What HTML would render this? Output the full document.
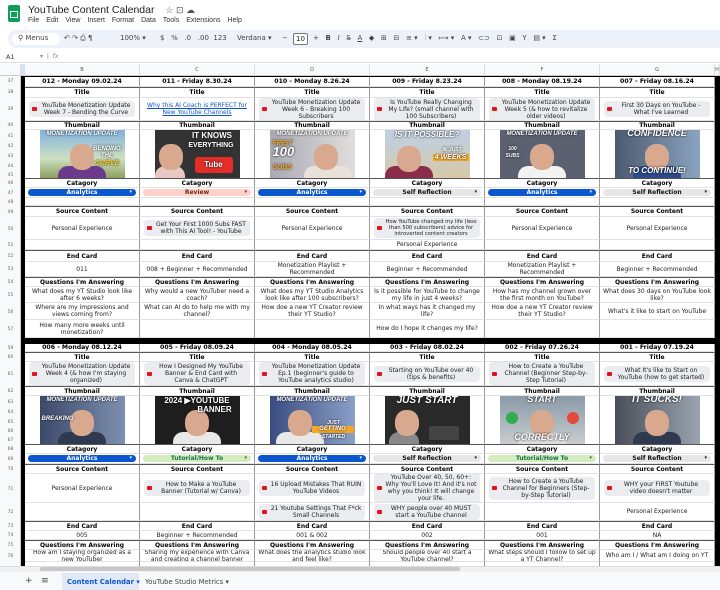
<!DOCTYPE html>
<html><head><meta charset="utf-8">
<style>
*{box-sizing:border-box;margin:0;padding:0}
body{width:720px;height:590px;overflow:hidden;background:#fff;font-family:"DejaVu Sans","Liberation Sans",sans-serif;position:relative;color:#1f1f1f}
.abs{position:absolute}
.menu span{margin-right:7px}
.tb{position:absolute;top:30px;left:8px;width:712px;height:18px;background:#edf2fa;border-radius:9px 0 0 9px}
.tb span{position:absolute;top:4px;font-size:7px;color:#444}
.colh{position:absolute;top:64px;height:12px;background:#f8f9fa;border-bottom:1px solid #ccc;border-right:1px solid #ddd;font-size:5px;color:#555;text-align:center;line-height:12px}
.rn{position:absolute;left:0;width:21px;font-size:4.5px;color:#666;text-align:center}
.blk{position:absolute;left:25px;width:690px;display:grid;grid-template-columns:repeat(6,115px);overflow:hidden;background:#fff}
.c{border-right:1px solid #9a9a9a;border-bottom:1px solid #e2e2e2;display:flex;align-items:center;justify-content:center;text-align:center;font-size:6px;line-height:7px;overflow:hidden;color:#222;padding:0 2px;flex-direction:column}
.s{border-top:1px solid #555}
.h{font-weight:bold;color:#000}
.hd{font-weight:bold;color:#000;font-size:6.2px}
.ch{background:#eaecef;border-radius:4px;padding:1px 3px;display:flex;align-items:center;gap:3px;max-width:106px;text-align:center}
.yt{width:5px;height:4px;background:#e5121a;border-radius:1px;flex:none}
.dd{width:108px;height:7px;border-radius:4px;font-weight:bold;font-size:6px;line-height:7px;position:relative}
.dd:after{content:"▾";position:absolute;right:4px;top:0;font-size:5px}
.an{background:#0b57d0;color:#fff}
.rv{background:#ffcfc9;color:#6b2b12}
.sr{background:#e6e6e6;color:#111}
.tu{background:#d4edbc;color:#11734b}
.th{width:85px;height:48px;position:relative;overflow:hidden;font-weight:bold;font-style:italic;color:#fff;font-family:"Liberation Sans",sans-serif;text-shadow:0 0 2px #000}
.th b{position:absolute;left:0;right:0;text-align:center}
.face{position:absolute;left:30px;top:14px;width:24px;height:26px;border-radius:45%;background:#d9a98f}
.body{position:absolute;left:18px;top:36px;width:48px;height:14px;border-radius:10px 10px 0 0}
.lk{color:#1155cc;text-decoration:underline}
.sm{font-size:5.2px;line-height:6px}
</style></head><body>

<!-- top chrome -->
<div class="abs" style="left:8px;top:5px;width:12px;height:17px;background:#0f9d58;border-radius:2px"></div>
<div class="abs" style="left:10px;top:11px;width:8px;height:7px;border:1px solid #fff"></div>
<div class="abs" style="left:28px;top:4px;font-size:10.5px;font-family:'Liberation Sans',sans-serif;color:#1f1f1f">YouTube Content Calendar <span style="font-size:9px;color:#555;margin-left:8px">☆ ⊡ ☁</span></div>
<div class="abs menu" style="left:28px;top:17px;font-size:7px;font-family:'Liberation Sans',sans-serif;color:#333"><span>File</span><span>Edit</span><span>View</span><span>Insert</span><span>Format</span><span>Data</span><span>Tools</span><span>Extensions</span><span>Help</span></div>
<div class="tb">
<div class="abs" style="left:4px;top:3px;width:48px;height:12px;background:#fff;border-radius:6px"></div>
<span style="left:10px">⚲ Menus</span>
<span style="left:56px">↶ ↷ ⎙ ¶</span>
<span style="left:112px">100% ▾</span>
<span style="left:152px">$ &nbsp; % &nbsp; .0 &nbsp; .00 &nbsp;123</span>
<span style="left:229px">Verdana ▾</span>
<span style="left:274px">−</span>
<div class="abs" style="left:285px;top:3px;width:15px;height:12px;border:1px solid #777;border-radius:2px;background:#fff;font-size:7px;text-align:center;line-height:10px">10</div>
<span style="left:305px">+ &nbsp; <b>B</b> &nbsp; <i>I</i> &nbsp; S̶ &nbsp; <u>A</u> &nbsp; ◆ &nbsp; ⊞ &nbsp; ⊟ &nbsp; ≡ ▾ &nbsp; ⫶ ▾ &nbsp; ⟼ ▾ &nbsp; A ▾ &nbsp; ⊂⊃ &nbsp; ⊡ &nbsp; ▣ &nbsp; Y &nbsp; ▤ ▾ &nbsp; Σ</span>
</div>
<div class="abs" style="left:6px;top:53px;font-size:6.5px;color:#333">A1</div>
<div class="abs" style="left:40px;top:53px;font-size:6px;color:#888">▾ &nbsp;| &nbsp;<i>fx</i></div>
<div class="abs" style="left:0;top:62px;width:720px;height:1px;background:#ddd"></div>

<!-- column headers -->
<div class="colh" style="left:0;width:21px"></div>
<div class="colh" style="left:21px;width:4px;background:#d3e3fd"></div>
<div class="colh" style="left:25px;width:115px">B</div>
<div class="colh" style="left:140px;width:115px">C</div>
<div class="colh" style="left:255px;width:115px">D</div>
<div class="colh" style="left:370px;width:115px">E</div>
<div class="colh" style="left:485px;width:115px">F</div>
<div class="colh" style="left:600px;width:115px">G</div>
<div class="colh" style="left:715px;width:5px">H</div>

<!-- row numbers -->
<div class="abs" style="left:0;top:76px;width:21px;height:492px;background:#f8f9fa;border-right:1px solid #ccc"></div>
<div class="rn" style="top:79px">37</div><div class="rn" style="top:90px">38</div><div class="rn" style="top:107px">39</div><div class="rn" style="top:123px">40</div><div class="rn" style="top:134px">41</div><div class="rn" style="top:144px">42</div><div class="rn" style="top:154px">43</div><div class="rn" style="top:164px">44</div><div class="rn" style="top:173px">45</div><div class="rn" style="top:181px">46</div><div class="rn" style="top:191px">47</div><div class="rn" style="top:200px">48</div><div class="rn" style="top:210px">49</div><div class="rn" style="top:227px">50</div><div class="rn" style="top:243px">51</div><div class="rn" style="top:254px">52</div><div class="rn" style="top:267px">53</div><div class="rn" style="top:280px">54</div><div class="rn" style="top:293px">55</div><div class="rn" style="top:310px">56</div><div class="rn" style="top:327px">57</div><div class="rn" style="top:346px">59</div><div class="rn" style="top:355px">60</div><div class="rn" style="top:372px">61</div><div class="rn" style="top:389px">62</div><div class="rn" style="top:400px">63</div><div class="rn" style="top:410px">64</div><div class="rn" style="top:420px">65</div><div class="rn" style="top:429px">66</div><div class="rn" style="top:438px">67</div><div class="rn" style="top:447px">68</div><div class="rn" style="top:457px">69</div><div class="rn" style="top:467px">70</div><div class="rn" style="top:487px">71</div><div class="rn" style="top:510px">72</div><div class="rn" style="top:524px">73</div><div class="rn" style="top:533px">74</div><div class="rn" style="top:543px">75</div><div class="rn" style="top:554px">76</div>

<!-- black frame -->
<div class="abs" style="left:21px;top:76px;width:4px;height:492px;background:#000"></div>
<div class="abs" style="left:715px;top:76px;width:5px;height:492px;background:#000"></div>
<div class="abs" style="left:21px;top:338px;width:699px;height:6px;background:#000"></div>
<div class="abs" style="left:25px;top:76px;width:690px;height:1px;background:#000"></div>

<!-- BLOCK 1 -->
<div class="blk" style="top:77px;height:261px;grid-template-rows:10px 11px 23px 9px 48px 10px 10px 8px 11px 23px 10px 12px 15px 10px 16px 17px 18px">
<div class="c hd">012 - Monday 09.02.24</div><div class="c hd">011 - Friday 8.30.24</div><div class="c hd">010 - Monday 8.26.24</div><div class="c hd">009 - Friday 8.23.24</div><div class="c hd">008 - Monday 08.19.24</div><div class="c hd">007 - Friday 08.16.24</div>
<div class="c h s">Title</div><div class="c h s">Title</div><div class="c h s">Title</div><div class="c h s">Title</div><div class="c h s">Title</div><div class="c h s">Title</div>
<div class="c"><div class="ch"><i class="yt"></i><span>YouTube Monetization Update Week 7 - Bending the Curve</span></div></div>
<div class="c"><span class="lk">Why this AI Coach is PERFECT for New YouTube Channels</span></div>
<div class="c"><div class="ch"><i class="yt"></i><span>YouTube Monetization Update Week 6 - Breaking 100 Subscribers</span></div></div>
<div class="c"><div class="ch"><i class="yt"></i><span>Is YouTube Really Changing My Life? (small channel with 100 Subscribers)</span></div></div>
<div class="c"><div class="ch"><i class="yt"></i><span>YouTube Monetization Update Week 5 (&amp; how to revitalize older videos)</span></div></div>
<div class="c"><div class="ch"><i class="yt"></i><span>First 30 Days on YouTube - What I've Learned</span></div></div>
<div class="c h s">Thumbnail</div><div class="c h s">Thumbnail</div><div class="c h s">Thumbnail</div><div class="c h s">Thumbnail</div><div class="c h s">Thumbnail</div><div class="c h s">Thumbnail</div>
<div class="c" style="border-bottom:none"><div class="th" style="background:linear-gradient(#7fb2e0,#cfe0c0 60%,#8aa060)"><div class="body" style="background:#6b3a8c"></div><div class="face"></div><b style="top:1px;font-size:6px;color:#fff">MONETIZATION UPDATE</b><b style="top:16px;left:50px;font-size:6px">BENDING<br>THE</b><b style="top:30px;left:50px;font-size:7px;color:#f6d024">CURVE</b></div></div>
<div class="c" style="border-bottom:none"><div class="th" style="background:#333"><div class="body" style="background:#e8c8c0;left:0;width:30px"></div><div class="face" style="left:4px"></div><b style="top:2px;left:30px;font-size:8px;font-style:normal">IT KNOWS</b><b style="top:12px;left:28px;font-size:7px;font-style:normal">EVERYTHING</b><b style="top:27px;left:40px;width:38px;height:16px;background:#e52d27;border-radius:3px;font-size:8px;font-style:normal;line-height:16px">Tube</b></div></div>
<div class="c" style="border-bottom:none"><div class="th" style="background:linear-gradient(90deg,#a9a9b3,#e0dedc)"><div class="body" style="background:#eae0da;left:34px"></div><div class="face" style="left:44px"></div><b style="top:1px;font-size:6px">MONETIZATION UPDATE</b><b style="top:10px;left:3px;width:30px;text-align:left;font-size:7px;color:#f5a623">FIRST</b><b style="top:18px;left:3px;width:30px;text-align:left;font-size:13px">100</b><b style="top:34px;left:3px;width:30px;text-align:left;font-size:7px;color:#f5a623">SUBS</b></div></div>
<div class="c" style="border-bottom:none"><div class="th" style="background:linear-gradient(#bcd0e6,#d7c9a8)"><div class="body" style="background:#8a2d4a;left:0"></div><div class="face" style="left:12px;top:16px"></div><b style="top:1px;font-size:8px">IS IT POSSIBLE?</b><b style="top:17px;left:50px;font-size:5px">IN JUST</b><b style="top:24px;left:48px;width:36px;background:#f5a623;font-size:7px">4 WEEKS</b></div></div>
<div class="c" style="border-bottom:none"><div class="th" style="background:#5b6170"><div class="body" style="background:#f2f2f2"></div><div class="face"></div><b style="top:1px;font-size:6px">MONETIZATION UPDATE</b><b style="top:16px;left:2px;width:22px;font-size:5px">100 SUBS</b></div></div>
<div class="c" style="border-bottom:none"><div class="th" style="background:linear-gradient(90deg,#4c5a70,#8aa4c0)"><div class="body" style="background:#2d4a8a"></div><div class="face"></div><b style="top:0px;font-size:9px">CONFIDENCE</b><b style="top:37px;font-size:8px">TO CONTINUE!</b></div></div>
<div class="c h s">Catagory</div><div class="c h s">Catagory</div><div class="c h s">Catagory</div><div class="c h s">Catagory</div><div class="c h s">Catagory</div><div class="c h s">Catagory</div>
<div class="c"><div class="dd an">Analytics</div></div><div class="c"><div class="dd rv">Review</div></div><div class="c"><div class="dd an">Analytics</div></div><div class="c"><div class="dd sr">Self Reflection</div></div><div class="c"><div class="dd an">Analytics</div></div><div class="c"><div class="dd sr">Self Reflection</div></div>
<div class="c"></div><div class="c"></div><div class="c"></div><div class="c"></div><div class="c"></div><div class="c"></div>
<div class="c h s">Source Content</div><div class="c h s">Source Content</div><div class="c h s">Source Content</div><div class="c h s">Source Content</div><div class="c h s">Source Content</div><div class="c h s">Source Content</div>
<div class="c">Personal Experience</div>
<div class="c"><div class="ch"><i class="yt"></i><span>Get Your First 1000 Subs FAST with This AI Tool! - YouTube</span></div></div>
<div class="c">Personal Experience</div>
<div class="c"><div class="ch sm"><i class="yt"></i><span>How YouTube changed my life (less than 500 subscribers) advice for introverted content creators</span></div></div>
<div class="c">Personal Experience</div>
<div class="c">Personal Experience</div>
<div class="c"></div><div class="c"></div><div class="c"></div><div class="c">Personal Experience</div><div class="c"></div><div class="c"></div>
<div class="c h s">End Card</div><div class="c h s">End Card</div><div class="c h s">End Card</div><div class="c h s">End Card</div><div class="c h s">End Card</div><div class="c h s">End Card</div>
<div class="c">011</div><div class="c">008 + Beginner + Recommended</div><div class="c">Monetization Playlist + Recommended</div><div class="c">Beginner + Recommended</div><div class="c">Monetization Playlist + Recommended</div><div class="c">Beginner + Recommended</div>
<div class="c h s">Questions I'm Answering</div><div class="c h s">Questions I'm Answering</div><div class="c h s">Questions I'm Answering</div><div class="c h s">Questions I'm Answering</div><div class="c h s">Questions I'm Answering</div><div class="c h s">Questions I'm Answering</div>
<div class="c">What does my YT Studio look like after 6 weeks?</div><div class="c">Why would a new YouTuber need a coach?</div><div class="c">What does my YT Studio Analytics look like after 100 subscribers?</div><div class="c">Is it possible for YouTube to change my life in just 4 weeks?</div><div class="c">How has my channel grown over the first month on YouTube?</div><div class="c">What does 30 days on YouTube look like?</div>
<div class="c">Where are my impressions and views coming from?</div><div class="c">What can AI do to help me with my channel?</div><div class="c">How doe a new YT Creator review their YT Studio?</div><div class="c">In what ways has it changed my life?</div><div class="c">How doe a new YT Creator review their YT Studio?</div><div class="c">What's it like to start on YouTube</div>
<div class="c">How many more weeks until monetization?</div><div class="c"></div><div class="c"></div><div class="c">How do I hope it changes my life?</div><div class="c"></div><div class="c"></div>
</div>

<!-- BLOCK 2 -->
<div class="blk" style="top:344px;height:224px;grid-template-rows:8px 10px 24px 10px 48px 10px 10px 10px 29px 18px 10px 9px 10px 12px 14px">
<div class="c hd">006 - Monday 08.12.24</div><div class="c hd">005 - Friday 08.09.24</div><div class="c hd">004 - Monday 08.05.24</div><div class="c hd">003 - Friday 08.02.24</div><div class="c hd">002 - Friday 07.26.24</div><div class="c hd">001 - Friday 07.19.24</div>
<div class="c h s">Title</div><div class="c h s">Title</div><div class="c h s">Title</div><div class="c h s">Title</div><div class="c h s">Title</div><div class="c h s">Title</div>
<div class="c"><div class="ch"><i class="yt"></i><span>YouTube Monetization Update Week 4 (&amp; how I'm staying organized)</span></div></div>
<div class="c"><div class="ch"><i class="yt"></i><span>How I Designed My YouTube Banner &amp; End Card with Canva &amp; ChatGPT</span></div></div>
<div class="c"><div class="ch"><i class="yt"></i><span>YouTube Monetization Update Ep.1 (beginner's guide to YouTube analytics studio)</span></div></div>
<div class="c"><div class="ch"><i class="yt"></i><span>Starting on YouTube over 40 (tips &amp; benefits)</span></div></div>
<div class="c"><div class="ch"><i class="yt"></i><span>How to Create a YouTube Channel (Beginner Step-by-Step Tutorial)</span></div></div>
<div class="c"><div class="ch"><i class="yt"></i><span>What It's like to Start on YouTube (how to get started)</span></div></div>
<div class="c h s">Thumbnail</div><div class="c h s">Thumbnail</div><div class="c h s">Thumbnail</div><div class="c h s">Thumbnail</div><div class="c h s">Thumbnail</div><div class="c h s">Thumbnail</div>
<div class="c" style="border-bottom:none"><div class="th" style="background:linear-gradient(90deg,#3c4a6a,#7d8fb0)"><div class="body" style="background:#2f3a50"></div><div class="face"></div><b style="top:1px;font-size:6px">MONETIZATION UPDATE</b><b style="top:20px;left:2px;width:30px;font-size:6px">BREAKING</b></div></div>
<div class="c" style="border-bottom:none"><div class="th" style="background:#1e1e1e"><div class="body" style="background:#e8e8e8"></div><div class="face"></div><b style="top:1px;font-size:8px;font-style:normal">2024 ▶YOUTUBE</b><b style="top:10px;left:36px;width:48px;font-size:8px;font-style:normal">BANNER</b></div></div>
<div class="c" style="border-bottom:none"><div class="th" style="background:linear-gradient(90deg,#3a4c80,#8aa0c8)"><div class="body" style="background:#e8e8e8;left:6px"></div><div class="face" style="left:18px"></div><b style="top:1px;font-size:6px">MONETIZATION UPDATE</b><b style="top:24px;left:44px;width:40px;font-size:5px">JUST</b><b style="top:30px;left:42px;width:42px;background:#f5a623;font-size:6px">GETTING</b><b style="top:38px;left:44px;width:40px;font-size:5px">STARTED</b></div></div>
<div class="c" style="border-bottom:none"><div class="th" style="background:#2a2a2a"><div class="body" style="background:#888;left:4px;width:30px"></div><div class="face" style="left:10px"></div><b style="top:1px;font-size:10px">JUST START</b><div class="abs" style="left:44px;top:30px;width:30px;height:14px;background:#444;border-radius:2px"></div></div></div>
<div class="c" style="border-bottom:none"><div class="th" style="background:linear-gradient(#8a9aa8,#c8ccd0)"><div class="body" style="background:#ddd"></div><div class="face"></div><b style="top:0px;font-size:9px">START</b><div class="abs" style="left:6px;top:16px;width:12px;height:12px;border-radius:50%;background:#2eae4a"></div><div class="abs" style="left:67px;top:16px;width:12px;height:12px;border-radius:50%;background:#e24a3a"></div><b style="top:38px;font-size:9px">CORRECTLY</b></div></div>
<div class="c" style="border-bottom:none"><div class="th" style="background:linear-gradient(90deg,#4a4e58,#9aa4b0)"><div class="body" style="background:#2f3a50"></div><div class="face"></div><b style="top:0px;font-size:10px">IT SUCKS!</b></div></div>
<div class="c h s">Catagory</div><div class="c h s">Catagory</div><div class="c h s">Catagory</div><div class="c h s">Catagory</div><div class="c h s">Catagory</div><div class="c h s">Catagory</div>
<div class="c"><div class="dd an">Analytics</div></div><div class="c"><div class="dd tu">Tutorial/How To</div></div><div class="c"><div class="dd an">Analytics</div></div><div class="c"><div class="dd sr">Self Reflection</div></div><div class="c"><div class="dd tu">Tutorial/How To</div></div><div class="c"><div class="dd sr">Self Reflection</div></div>
<div class="c h s">Source Content</div><div class="c h s">Source Content</div><div class="c h s">Source Content</div><div class="c h s">Source Content</div><div class="c h s">Source Content</div><div class="c h s">Source Content</div>
<div class="c">Personal Experience</div>
<div class="c"><div class="ch"><i class="yt"></i><span>How to Make a YouTube Banner (Tutorial w/ Canva)</span></div></div>
<div class="c"><div class="ch"><i class="yt"></i><span>16 Upload Mistakes That RUIN YouTube Videos</span></div></div>
<div class="c"><div class="ch"><i class="yt"></i><span>YouTube Over 40, 50, 60+: Why You'll Love It! And it's not why you think! It will change your life.</span></div></div>
<div class="c"><div class="ch"><i class="yt"></i><span>How to Create a YouTube Channel for Beginners (Step-by-Step Tutorial)</span></div></div>
<div class="c"><div class="ch"><i class="yt"></i><span>WHY your FIRST Youtube video doesn't matter</span></div></div>
<div class="c"></div><div class="c"></div>
<div class="c"><div class="ch"><i class="yt"></i><span>21 Youtube Settings That F*ck Small Channels</span></div></div>
<div class="c"><div class="ch"><i class="yt"></i><span>WHY people over 40 MUST start a YouTube channel</span></div></div>
<div class="c"></div><div class="c">Personal Experience</div>
<div class="c h s">End Card</div><div class="c h s">End Card</div><div class="c h s">End Card</div><div class="c h s">End Card</div><div class="c h s">End Card</div><div class="c h s">End Card</div>
<div class="c">005</div><div class="c">Beginner + Recommended</div><div class="c">001 &amp; 002</div><div class="c">002</div><div class="c">001</div><div class="c">NA</div>
<div class="c h s">Questions I'm Answering</div><div class="c h s">Questions I'm Answering</div><div class="c h s">Questions I'm Answering</div><div class="c h s">Questions I'm Answering</div><div class="c h s">Questions I'm Answering</div><div class="c h s">Questions I'm Answering</div>
<div class="c">How am I staying organized as a new YouTuber</div><div class="c">Sharing my experience with Canva and creating a channel banner</div><div class="c">What does the analytics studio look and feel like?</div><div class="c">Should people over 40 start a YouTube channel?</div><div class="c">What steps should I follow to set up a YT Channel?</div><div class="c">Who am I / What am I doing on YT</div>
<div class="c"></div><div class="c"></div><div class="c"></div><div class="c"></div><div class="c"></div><div class="c"></div>
</div>

<!-- bottom -->
<div class="abs" style="left:0;top:566px;width:720px;height:6px;background:#f1f1f1;border-top:1px solid #ddd"></div>
<div class="abs" style="left:40px;top:567px;width:420px;height:4px;background:#c8c8c8;border-radius:2px"></div>
<div class="abs" style="left:0;top:572px;width:720px;height:18px;background:#f8f9fa"></div>
<div class="abs" style="left:25px;top:576px;font-size:9px;color:#444">+ &nbsp; ≡</div>
<div class="abs" style="left:62px;top:573px;width:77px;height:17px;background:#e1e9f7"></div>
<div class="abs" style="left:67px;top:578px;font-size:6.8px;color:#0b57d0;font-weight:bold">Content Calendar ▾</div>
<div class="abs" style="left:145px;top:578px;font-size:6.8px;color:#444">YouTube Studio Metrics ▾</div>
</body></html>
